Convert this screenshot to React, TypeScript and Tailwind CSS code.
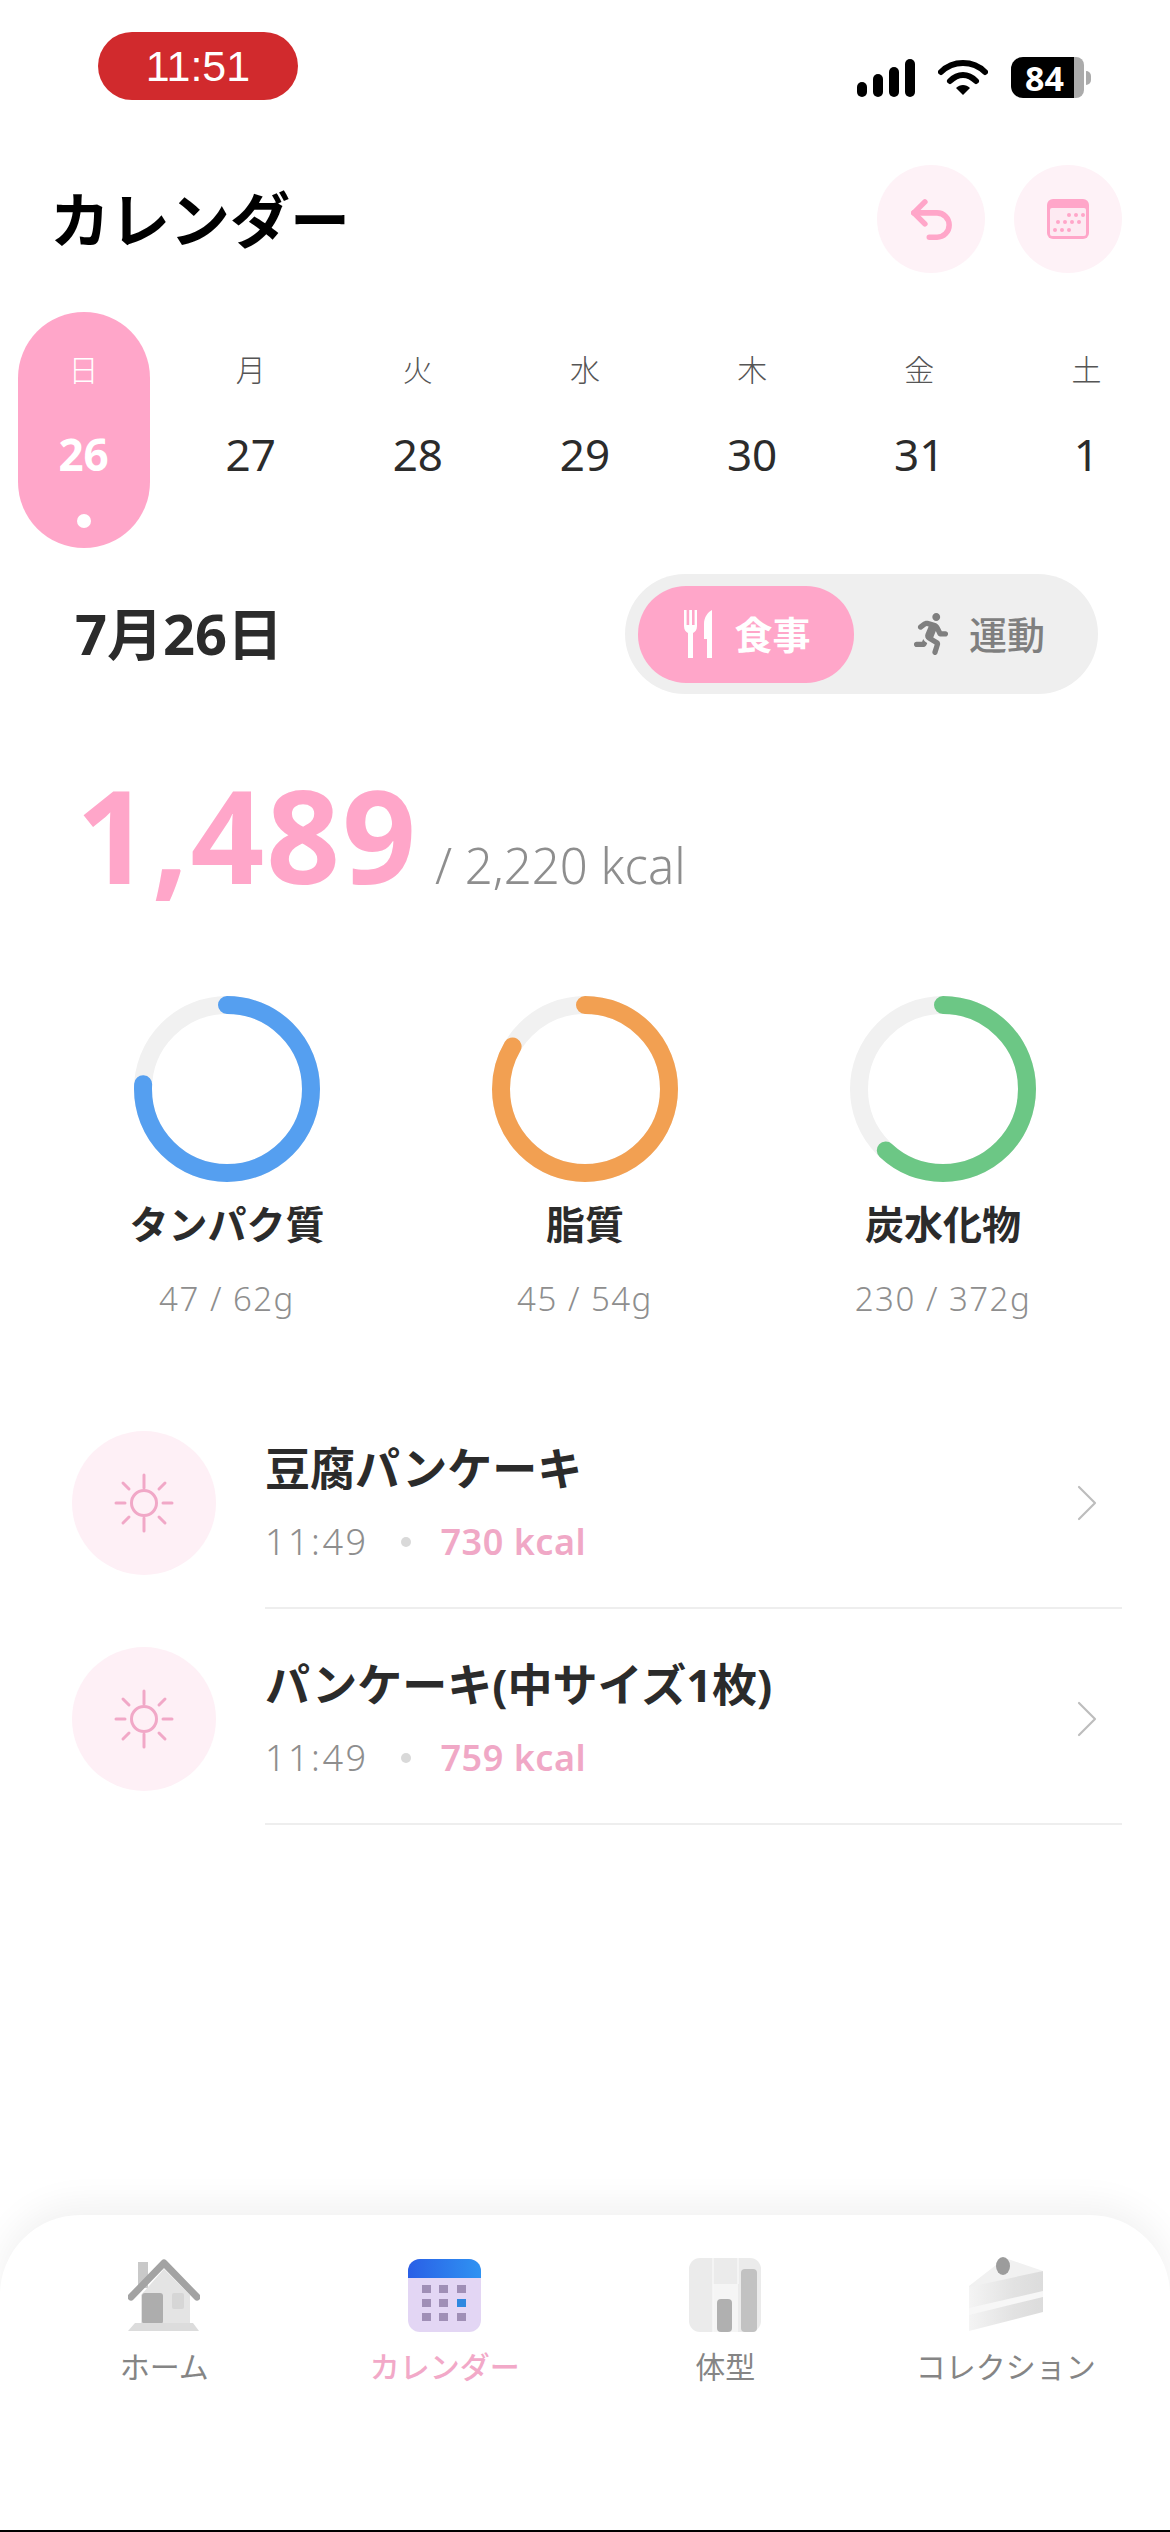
import { ChevronRight, Undo2 } from "lucide-react";
import { FaRunning } from "react-icons/fa";

const week = [
  { label: "日", day: 26, active: true },
  { label: "月", day: 27 },
  { label: "火", day: 28 },
  { label: "水", day: 29 },
  { label: "木", day: 30 },
  { label: "金", day: 31 },
  { label: "土", day: 1 },
];

const nutrients = [
  { name: "タンパク質", value: 47, goal: 62, color: "#559ff0" },
  { name: "脂質", value: 45, goal: 54, color: "#f2a052" },
  { name: "炭水化物", value: 230, goal: 372, color: "#6cc785" },
];

const meals = [
  { name: "豆腐パンケーキ", time: "11:49", kcal: 730 },
  { name: "パンケーキ(中サイズ1枚)", time: "11:49", kcal: 759 },
];

function SignalIcon() {
  return (
    <svg width="58" height="38" viewBox="0 0 58 38" fill="#000">
      <rect x="0" y="23" width="10" height="15" rx="5" />
      <rect x="16" y="15" width="10" height="23" rx="5" />
      <rect x="32" y="8" width="10" height="30" rx="5" />
      <rect x="48" y="0" width="10" height="38" rx="5" />
    </svg>
  );
}

function WifiIcon() {
  return (
    <svg width="50" height="38" viewBox="0 0 50 38" fill="none" stroke="#000" strokeWidth="6" strokeLinecap="round">
      <path d="M3 13C15 1 35 1 47 13" />
      <path d="M12 22C20 14 30 14 38 22" />
      <path d="M18 29L25 36L32 29C28 25 22 25 18 29Z" fill="#000" stroke="none" />
    </svg>
  );
}

function BatteryIcon() {
  return (
    <div className="flex items-center">
      <div className="flex h-[41px] w-[73px]">
        <div className="flex w-[63px] items-center justify-center rounded-l-[12px] bg-black pl-[4px] text-[34px] leading-none font-bold text-white">
          84
        </div>
        <div className="flex-1 rounded-r-[8px] bg-[#ababab]" />
      </div>
      <div className="ml-[2px] h-[14px] w-[5px] rounded-r-full bg-[#ababab]" />
    </div>
  );
}

function CalendarGlyph() {
  const dots = [
    [22, 16], [29, 16], [36, 16],
    [11, 23], [18, 23], [25, 23], [32, 23],
    [8, 31], [15, 31], [22, 31],
  ];
  return (
    <svg width="42" height="40" viewBox="0 0 42 40">
      <rect width="42" height="40" rx="6" fill="#ffa6c9" />
      <rect x="3" y="9" width="36" height="28" rx="2" fill="#fdeaf2" />
      {dots.map(([cx, cy]) => (
        <circle key={`${cx}-${cy}`} cx={cx} cy={cy} r="2" fill="#ffa6c9" />
      ))}
    </svg>
  );
}

function CutleryIcon() {
  return (
    <svg width="28" height="48" viewBox="0 0 28 48" fill="#fff">
      <path d="M0 0h2.6v15h2.6V0h2.8v15h2.6V0H13v16c0 4-2 6-4 7v25H4V23c-2-1-4-3-4-7z" />
      <path d="M28 0v48h-5V29h-3V14C20 7 24 2 28 0z" />
    </svg>
  );
}

function SunIcon() {
  const rays = [
    "M0 -28V-15",
    "M0 28V15",
    "M-28 0H-19",
    "M28 0H19",
    "M-21 -20L-15 -14",
    "M21 -20L15 -14",
    "M-21 20L-15 14",
    "M21 20L15 14",
  ];
  return (
    <svg width="60" height="60" viewBox="-30 -30 60 60" fill="none" stroke="#f1a8c7" strokeWidth="3" strokeLinecap="round">
      <circle r="12.5" />
      {rays.map((d) => (
        <path key={d} d={d} />
      ))}
    </svg>
  );
}

function Ring({ value, goal, color }: { value: number; goal: number; color: string }) {
  const radius = 84;
  const length = 2 * Math.PI * radius;
  return (
    <svg width="186" height="186" viewBox="0 0 186 186" className="-rotate-90">
      <circle cx="93" cy="93" r={radius} fill="none" stroke="#f1f1f1" strokeWidth="18" />
      <circle
        cx="93"
        cy="93"
        r={radius}
        fill="none"
        stroke={color}
        strokeWidth="18"
        strokeLinecap="round"
        strokeDasharray={`${(value / goal) * length} ${length}`}
      />
    </svg>
  );
}

function HomeTab() {
  return (
    <svg width="72" height="73" viewBox="0 0 72 73">
      <rect x="10" y="3" width="10" height="26" fill="#c9c9c9" />
      <path d="M13 36L36 10L62 36V66H13Z" fill="#e4e4e4" />
      <rect x="14" y="34" width="21" height="31" rx="3" fill="#adadad" />
      <rect x="44" y="34" width="12" height="16" rx="2" fill="#d6d6d6" />
      <path d="M3 38L36 4L69 38" fill="none" stroke="#a3a3a3" strokeWidth="7" strokeLinecap="round" strokeLinejoin="round" />
      <path d="M7 64H65L71 72H0Z" fill="#dcdcdc" />
    </svg>
  );
}

function CalendarTab() {
  const xs = [14, 31, 49];
  const ys = [26, 40, 54];
  return (
    <svg width="73" height="73" viewBox="0 0 73 73">
      <defs>
        <linearGradient id="calendarHead" x1="0" x2="1" y1="0" y2="0">
          <stop offset="0" stopColor="#2a5fe6" />
          <stop offset="1" stopColor="#2f93f2" />
        </linearGradient>
      </defs>
      <rect width="73" height="73" rx="12" fill="#e3d6f4" />
      <path d="M0 19V12A12 12 0 0 1 12 0H61A12 12 0 0 1 73 12V19Z" fill="url(#calendarHead)" />
      {ys.map((y, row) =>
        xs.map((x, col) => (
          <rect
            key={`${row}-${col}`}
            x={x}
            y={y}
            width="9"
            height="8"
            fill={row === 1 && col === 2 ? "#2f88e0" : "#a08fb6"}
          />
        )),
      )}
    </svg>
  );
}

function ChartTab() {
  return (
    <svg width="72" height="74" viewBox="0 0 72 74">
      <rect width="72" height="74" rx="11" fill="#ebebeb" />
      <rect x="24" y="26" width="25" height="48" fill="#f5f5f5" />
      <path d="M24 0V74M49 0V26" stroke="#f8f8f8" strokeWidth="1.5" />
      <rect x="28" y="41" width="15" height="33" rx="4" fill="#b0b0b0" />
      <rect x="52" y="11" width="16" height="63" rx="4" fill="#c2c2c2" />
    </svg>
  );
}

function CakeTab() {
  return (
    <svg width="74" height="76" viewBox="0 0 74 76">
      <defs>
        <linearGradient id="cakeFront" x1="0" x2="1" y1="0" y2="0">
          <stop offset="0" stopColor="#f4f4f4" />
          <stop offset="0.6" stopColor="#e2e2e2" />
          <stop offset="1" stopColor="#dcdcdc" />
        </linearGradient>
      </defs>
      <path d="M0 30L36 2L74 15L0 36Z" fill="#f1f1f1" />
      <path d="M0 31L74 15V56L0 75Z" fill="url(#cakeFront)" />
      <path d="M0 52L74 35V41L0 59Z" fill="#f7f7f7" />
      <ellipse cx="34" cy="10" rx="7" ry="9" fill="#9c9c9c" />
    </svg>
  );
}

const tabs = [
  { label: "ホーム", icon: <HomeTab /> },
  { label: "カレンダー", icon: <CalendarTab />, active: true },
  { label: "体型", icon: <ChartTab /> },
  { label: "コレクション", icon: <CakeTab /> },
];

export default function App() {
  return (
    <div className="flex h-[2532px] w-[1170px] flex-col overflow-hidden bg-white font-['Noto_Sans','Noto_Sans_CJK_JP',sans-serif] text-[#2b2b2b]">
      {/* status bar */}
      <div className="flex h-[132px] items-start justify-between pt-[32px] pr-[79px] pl-[98px]">
        <div className="flex h-[68px] w-[200px] items-center justify-center rounded-[34px] bg-[#d12a2d] font-['Liberation_Sans',sans-serif] text-[43px] text-white">
          11:51
        </div>
        <div className="mt-[25px] flex items-center gap-[23px]">
          <SignalIcon />
          <WifiIcon />
          <BatteryIcon />
        </div>
      </div>

      {/* title row */}
      <div className="mt-[33px] flex h-[108px] items-center justify-between pr-[48px] pl-[50px]">
        <h1 className="pt-[2px] text-[60px] leading-none font-bold text-black">カレンダー</h1>
        <div className="flex gap-[29px]">
          <button className="flex size-[108px] items-center justify-center rounded-full bg-[#fef2f7]">
            <Undo2 size={53} strokeWidth={2.5} color="#ffa6c9" />
          </button>
          <button className="flex size-[108px] items-center justify-center rounded-full bg-[#fef2f7]">
            <CalendarGlyph />
          </button>
        </div>
      </div>

      {/* week strip */}
      <div className="mt-[39px] grid h-[236px] grid-cols-7">
        {week.map((d) => (
          <div key={d.label} className="flex justify-center">
            <div
              className={`flex h-full w-[132px] flex-col items-center rounded-[66px] ${
                d.active ? "bg-[#ffa6c9] text-white" : "text-[#2b2b2b]"
              }`}
            >
              <span className={`mt-[38px] text-[30px] leading-[40px] font-light ${d.active ? "" : "text-[#555]"}`}>{d.label}</span>
              <span className={`mt-[34px] text-[44px] leading-[60px] ${d.active ? "font-bold" : ""}`}>{d.day}</span>
              {d.active && <span className="mt-[30px] size-[14px] rounded-full bg-white" />}
            </div>
          </div>
        ))}
      </div>

      {/* date and meal / exercise switch */}
      <div className="mt-[26px] flex items-center justify-between pr-[72px] pl-[75px]">
        <h2 className="pb-[2px] text-[56px] leading-none font-bold">7月26日</h2>
        <div className="flex h-[120px] w-[473px] items-center rounded-[60px] bg-[#efefef] pl-[13px]">
          <div className="flex h-[97px] w-[216px] items-center justify-center gap-[22px] rounded-[48px] bg-[#ffa6c9] pl-[3px] text-[38px] font-bold text-white">
            <CutleryIcon />
            <span>食事</span>
          </div>
          <div className="ml-[56px] flex items-center gap-[17px] text-[38px] font-medium text-[#7f7f7f]">
            <FaRunning size={42} color="#7f7f7f" />
            <span>運動</span>
          </div>
        </div>
      </div>

      {/* calorie total */}
      <div className="mt-[65px] flex items-baseline pl-[76px]">
        <span className="text-[129px] leading-[150px] font-bold tracking-[2px] text-[#ffa6c9]">1,489</span>
        <span className="ml-[17px] text-[49px] leading-none font-light text-[#8e8e8e]">/ 2,220 kcal</span>
      </div>

      {/* macro rings */}
      <div className="mt-[87px] grid grid-cols-3 px-[48px]">
        {nutrients.map((n) => (
          <div key={n.name} className="flex flex-col items-center">
            <Ring value={n.value} goal={n.goal} color={n.color} />
            <span className="mt-[17px] text-[39px] leading-[50px] font-bold">{n.name}</span>
            <span className="mt-[30px] text-[33px] leading-[40px] font-light tracking-[1.5px] text-[#8e8e8e]">
              {n.value} / {n.goal}g
            </span>
          </div>
        ))}
      </div>

      {/* meal list */}
      <div className="mt-[112px] flex flex-col">
        {meals.map((m) => (
          <div key={m.name} className="flex h-[216px] pl-[72px]">
            <div className="flex size-[144px] items-center justify-center rounded-full bg-[#fef0f6]">
              <SunIcon />
            </div>
            <div className="mr-[48px] ml-[49px] h-[178px] flex-1 border-b-2 border-[#eeeeee]">
              <div className="flex h-[144px] items-center justify-between">
                <div className="flex flex-col">
                  <span className="text-[45px] leading-[56px] font-bold">{m.name}</span>
                  <div className="mt-[22px] flex items-center text-[36px] leading-[46px]">
                    <span className="font-light tracking-[2.5px] text-[#8e8e8e]">{m.time}</span>
                    <span className="mr-[30px] ml-[32px] size-[10px] rounded-full bg-[#d9d9d9]" />
                    <span className="font-semibold tracking-[0.5px] text-[#f0a8c6]">{m.kcal} kcal</span>
                  </div>
                </div>
                <ChevronRight size={64} strokeWidth={0.8} color="#bdbdbd" className="mr-[3px]" />
              </div>
            </div>
          </div>
        ))}
      </div>

      {/* tab bar */}
      <nav className="mt-auto grid h-[315px] grid-cols-4 rounded-t-[80px] bg-white px-[24px] pt-[41px] shadow-[0_-10px_36px_rgba(0,0,0,0.06)]">
        {tabs.map((t) => (
          <div key={t.label} className="flex flex-col items-center">
            <div className="flex h-[76px] items-end">{t.icon}</div>
            <span className={`mt-[15px] text-[30px] leading-[40px] ${t.active ? "font-medium text-[#f2a9c8]" : "text-[#858585]"}`}>
              {t.label}
            </span>
          </div>
        ))}
      </nav>
      <div className="h-[2px] bg-black" />
    </div>
  );
}
